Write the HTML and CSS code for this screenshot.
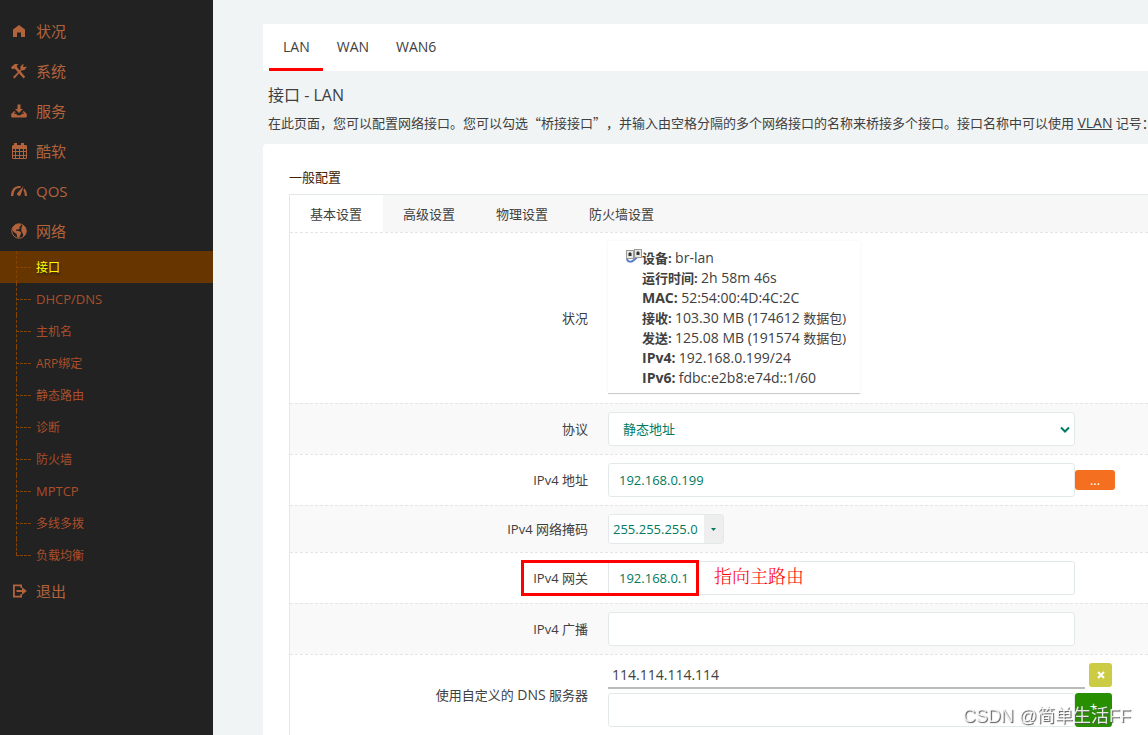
FILE: index.html
```html
<!DOCTYPE html>
<html lang="zh-CN">
<head>
<meta charset="utf-8">
<title>接口 - LAN</title>
<link rel="stylesheet" href="styles.css">
</head>
<body>
<div class="layout">
  <nav class="sidebar">
    <ul class="menu">
      <li><a class="menu-link" href="#"><svg class="menu-icon" viewBox="0 0 16 16"><path d="M8 2 2 6.500V14h4V9.500h4V14h4V6.500z"/></svg>状况</a></li>
      <li><a class="menu-link" href="#"><svg class="menu-icon" viewBox="0 0 16 16"><path d="M0 4.200 3.800.9 7.600.9 5.800 2.600 6.200 4.400 14.200 13.800l-1.600 1.600L4.400 6.200 2.800 5.400 1.400 6.400z"/><path d="M2 14 9.600 6.400l-.2-3L12 .9l.6.2-.6 2.400.8.800 2.400-.8.4.8-2.200 2.800-3 .4-6.800 7.900z"/></svg>系统</a></li>
      <li><a class="menu-link" href="#"><svg class="menu-icon" viewBox="0 0 16 16"><path d="M6.500 1.500h3V6H12L8 10 4 6h2.500z"/><path d="M3.200 8 5 9.600H3.600l-.8 1.200h2.400l1 1.400h3.600l1-1.400h2.400l-.8-1.200H11L12.800 8l3 3v2.500a1 1 0 0 1-1 1H1.200a1 1 0 0 1-1-1V11z"/></svg>服务</a></li>
      <li><a class="menu-link" href="#"><svg class="menu-icon" viewBox="0 0 16 16"><path fill-rule="evenodd" d="M1 3l1-1h1V0h3v2h4V0h3v2h2l1 1v12l-1 1H2l-1-1zM2 6v2h2V6zm3 0v2h3V6zm4 0v2h3V6zm4 0v2h2V6zM2 9v3h2V9zm3 0v3h3V9zm4 0v3h3V9zm4 0v3h2V9zM2 13v2h2v-2zm3 0v2h3v-2zm4 0v2h3v-2zm4 0v2h2v-2z"/></svg>酷软</a></li>
      <li><a class="menu-link" href="#"><svg class="menu-icon" viewBox="0 0 16 16"><path d="M0 13C0 6 4 2.600 9 3l1 .4-1 1.600C5 4.400 2.600 7.400 2.400 13zM12.600 3 9.600 12a2 2 0 0 1-3.600-1.400zM13.200 5.200C15 7 16 9.600 16 13h-2.200c0-2.600-.4-4.200-1.400-5.600z"/></svg>QOS</a></li>
      <li><a class="menu-link" href="#"><svg class="menu-icon" viewBox="0 0 16 16"><circle cx="8" cy="8" r="7.200" fill="none" stroke="currentColor"/><path d="M2 4.500 5 1.200 9.400 1 10 2.600 8.200 4 9 5 7.400 6.400H5.200l-.2 1.400 3 .2 2.400 1.800L9.200 12l-1 2.800-2-.6-.6-3.400L3.400 9.400 1 6.800zM10.600 4l1.200-2 3 3.200.6 3.600-1.400 3.400-1.600 1-.6-3-1.400-2L10.400 6z"/></svg>网络</a>
        <ul class="submenu">
          <li class="active"><a href="#">接口</a></li>
          <li class="latin"><a href="#">DHCP/DNS</a></li>
          <li><a href="#">主机名</a></li>
          <li><a href="#">ARP绑定</a></li>
          <li><a href="#">静态路由</a></li>
          <li><a href="#">诊断</a></li>
          <li><a href="#">防火墙</a></li>
          <li class="latin"><a href="#">MPTCP</a></li>
          <li><a href="#">多线多拨</a></li>
          <li><a href="#">负载均衡</a></li>
        </ul>
      </li>
      <li><a class="menu-link" href="#"><svg class="menu-icon" viewBox="0 0 16 16"><path d="M2 1.500h9V5H9.400V3.300H3.800v9.400h5.600V11H11v3.500H2zM5.500 7h5.500V4.200L15.800 8 11 11.800V9H5.500z"/></svg>退出</a></li>
    </ul>
  </nav>
  <main class="content">
    <nav class="net-tabs">
      <a class="net-tab current" href="#">LAN</a>
      <a class="net-tab" href="#">WAN</a>
      <a class="net-tab" href="#">WAN6</a>
    </nav>
    <header class="intro">
      <h1>接口 - LAN</h1>
      <p>在此页面，您可以配置网络接口。您可以勾选<span class="quote">“桥接接口”</span>，并输入由空格分隔的多个网络接口的名称来桥接多个接口。接口名称中可以使用 <a href="#">VLAN</a> 记号：</p>
    </header>
    <section class="card">
      <h2>一般配置</h2>
      <form class="panel">
        <div class="tabs">
          <button class="tab current" type="button">基本设置</button>
          <button class="tab" type="button">高级设置</button>
          <button class="tab" type="button">物理设置</button>
          <button class="tab" type="button">防火墙设置</button>
        </div>
        <div class="row status-row">
          <span class="label">状况</span>
          <div class="status">
            <svg class="bridge-icon" viewBox="0 0 16 16"><path d="M1 10c0 5 5 4 7 2s3-2 4-5" fill="none" stroke="#5b7fc4" stroke-width="2"/><rect x=".5" y="2.500" width="7" height="8" fill="#e8e8e4" stroke="#999"/><rect x="8.500" y="1.500" width="7" height="8" fill="#e8e8e4" stroke="#999"/><path d="M2.500 8V5h1V4h1v1h1v3zM10.500 7V4h1V3h1v1h1v3z" fill="#333"/></svg>
            <div>
              <b>设备:</b> <span class="value">br-lan</span><br>
              <b>运行时间:</b> <span class="value">2h 58m 46s</span><br>
              <b class="value">MAC:</b> <span class="value">52:54:00:4D:4C:2C</span><br>
              <b>接收:</b> <span class="value">103.30 MB (174612</span> 数据包)<br>
              <b>发送:</b> <span class="value">125.08 MB (191574</span> 数据包)<br>
              <b class="value">IPv4:</b> <span class="value">192.168.0.199/24</span><br>
              <b class="value">IPv6:</b> <span class="value">fdbc:e2b8:e74d::1/60</span>
            </div>
          </div>
        </div>
        <div class="row">
          <label class="label" for="proto">协议</label>
          <div class="field select-field">
            <select id="proto" class="input"><option>静态地址</option></select>
            <svg class="chevron" viewBox="0 0 10 8"><path d="M1 1.500 5 5.500 9 1.500" fill="none" stroke="currentColor" stroke-width="2"/></svg>
          </div>
        </div>
        <div class="row">
          <label class="label" for="ip">IPv4 地址</label>
          <div class="field"><input id="ip" class="input" value="192.168.0.199"></div>
          <button class="more" type="button">...</button>
        </div>
        <div class="row">
          <label class="label" for="mask">IPv4 网络掩码</label>
          <div class="combo"><input id="mask" value="255.255.255.0"><button type="button" aria-label="展开"><svg viewBox="0 0 5 3"><path d="M0 0h5L2.500 3z" fill="currentColor"/></svg></button></div>
        </div>
        <div class="row">
          <label class="label" for="gw">IPv4 网关</label>
          <div class="field noted"><input id="gw" class="input" value="192.168.0.1"><span class="marker"></span><span class="note">指向主路由</span></div>
        </div>
        <div class="row">
          <label class="label" for="bcast">IPv4 广播</label>
          <div class="field"><input id="bcast" class="input"></div>
        </div>
        <div class="row">
          <label class="label" for="dns">使用自定义的 <span class="value">DNS</span> 服务器</label>
          <div class="dns">
            <div class="dns-line"><span class="dns-item">114.114.114.114</span><button class="remove" type="button" aria-label="删除"><svg viewBox="0 0 8 8"><path d="M1 1l6 6M7 1 1 7" stroke="currentColor" stroke-width="2"/></svg></button></div>
            <div class="dns-line"><input id="dns" class="input"><button class="add" type="button">+</button></div>
          </div>
        </div>
      </form>
    </section>
  </main>
</div>
<div class="watermark">CSDN @简单生活FF</div>
</body>
</html>
```
FILE: styles.css
```css
* { box-sizing: border-box; }
html, body { height: 100%; }
body {
  margin: 0;
  overflow: hidden;
  background: #f0f4f5;
  color: #404040;
  font: 13px/20px "Open Sans", "Noto Sans CJK SC", sans-serif;
  text-spacing-trim: space-all;
}
ul { list-style: none; margin: 0; padding: 0; }
a { color: inherit; text-decoration: none; }
button, input, select { font: inherit; }
button { border: 0; padding: 0; }

.layout { display: flex; height: 100vh; }
.sidebar { flex: 0 0 213px; padding-top: 11px; background: #222; color: #b3633c; }
.menu-link { display: flex; align-items: center; gap: 9px; height: 40px; padding-left: 11px; font-size: 15px; }
.menu-icon { width: 16px; height: 16px; fill: currentColor; }
.submenu { color: #ab4e2a; font-size: 12px; }
.submenu .latin { font-size: 13px; }
.submenu li { position: relative; height: 32px; }
.submenu a { display: block; padding-left: 36px; line-height: 34px; }
.submenu .latin a { line-height: 32px; }
.submenu li::before, .submenu li::after { content: ""; position: absolute; left: 16px; }
.submenu li::before { top: 0; height: 100%; border-left: 1px dashed #854400; }
.submenu li::after { top: 16px; width: 15px; border-top: 1px dashed #854400; }
.submenu li:last-child::before { height: 50%; }
.submenu .active { background: #663500; color: #ff0; text-shadow: 1px 2px 2px #222; }

.content { flex: 1; min-width: 0; padding: 24px 0 0 50px; overflow: hidden; }
.net-tabs { display: flex; height: 47px; padding-left: 6px; background: #fff; font-size: 14px; }
.net-tab { padding: 0 13px 0 14px; border-bottom: 3px solid transparent; line-height: 46px; }
.net-tab.current { border-color: #f00; }
.intro { padding: 12px 0 11px 5px; white-space: nowrap; }
.intro h1 { margin: 0 0 6px; font-size: 16px; line-height: 24px; font-weight: 400; }
.intro p { margin: 0; }
.intro a { font-size: 14px; text-decoration: underline; }
.quote { font-family: "Noto Sans CJK SC", sans-serif; }

.card { padding: 23px 0 0 26px; border-radius: 4px 0 0 0; background: #fff; }
.card h2 { margin: 0 0 7px; color: #402000; font-size: 13px; line-height: 20px; font-weight: 400; }
.panel { border: solid #e3e9ea; border-width: 1px 0 0 1px; }
.tabs { display: flex; height: 37px; background: #f7f7f7; }
.tab { padding: 0 21px 0 20px; background: none; color: #404040; }
.tab.current { background: #fff; }
.row { display: flex; align-items: center; gap: 20px; padding: 8px 0; border-top: 1px dashed #e5e5e5; }
.row:nth-child(odd) { background: #f9f9f9; }
.status-row { padding-bottom: 9px; }
.label { flex: 0 0 298px; text-align: right; }
.status { display: flex; padding: 7px 14px 5px 18px; border-bottom: 1px solid #ccc; box-shadow: 0 0 2px #eee; }
.value { font-size: 14px; line-height: 1; }
.bridge-icon { width: 16px; height: 16px; }
.field { position: relative; flex: 0 0 467px; }
.input { display: block; width: 100%; height: 34px; padding: 0 10px; border: 1px solid #e3e9ea; border-radius: 3px; background: #fff; color: #007a60; }
select.input { appearance: none; padding-left: 14px; }
.chevron { position: absolute; right: 5px; top: 14px; width: 10px; height: 8px; color: #007a60; }
.more { width: 40px; height: 20px; margin-left: -20px; border-radius: 3px; background: #f56f21; color: #fff; }
.combo { display: flex; width: 116px; height: 30px; border: 1px solid #e3e9ea; border-radius: 3px; overflow: hidden; }
.combo input { flex: 1; min-width: 0; padding: 0 4px; border: 0; color: #007a60; }
.combo button { width: 19px; background: #eee; color: #007a60; }
.combo svg { width: 5px; height: 3px; display: block; margin: auto; }
.marker { position: absolute; left: -87px; top: -1px; width: 178px; height: 36px; border: 3px solid #f00; }
.note { position: absolute; left: 106px; top: 4px; color: #f00; font: 18px/24px "Liberation Serif", "Noto Serif CJK SC", "Noto Sans CJK SC", serif; font-weight: 300; }
.dns { display: grid; gap: 4px; }
.dns-line { display: flex; align-items: flex-start; }
.dns-item { width: 477px; height: 26px; padding: 2px 4px; border-bottom: 2px solid #bbb; font-size: 14px; }
.dns-line .input { width: 467px; }
.remove { width: 23px; height: 24px; margin-left: 4px; border-radius: 3px; background: #cc4; color: #fff; }
.remove svg { display: block; width: 8px; height: 8px; margin: auto; }
.add { width: 37px; height: 34px; padding-bottom: 8px; border-radius: 3px; background: #289000; color: #fff; }
.watermark { position: fixed; right: 17px; bottom: 6px; color: rgba(255,255,255,.85); font: 18px/26px "Liberation Sans", "Noto Sans CJK SC", sans-serif; text-shadow: 1px 1px 1px #555; }
```
